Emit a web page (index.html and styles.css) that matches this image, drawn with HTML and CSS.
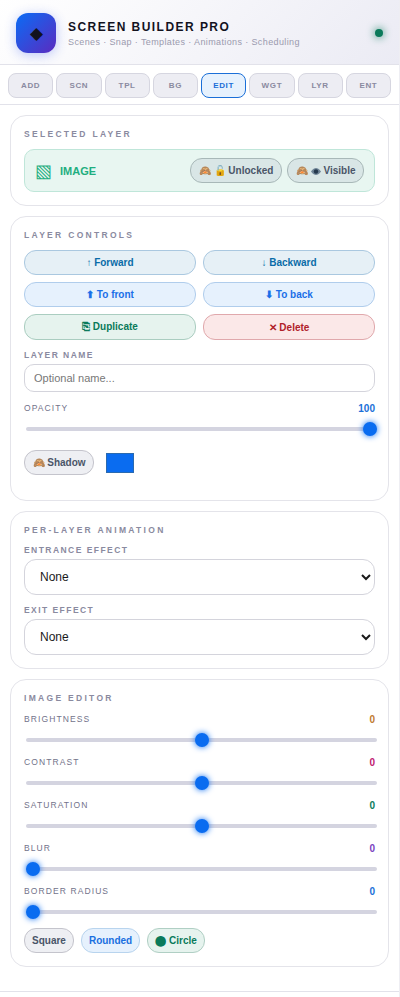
FILE: index.html
```html
<!DOCTYPE html>
<html lang="en">
<head>
<meta charset="utf-8">
<title>Screen Builder Pro</title>
<link rel="stylesheet" href="styles.css">
</head>
<body>
<div class="panel">
  <header class="header">
    <div class="logo">◆</div>
    <div class="brand">
      <div class="title">SCREEN BUILDER PRO</div>
      <div class="subtitle">Scenes · Snap · Templates · Animations · Scheduling</div>
    </div>
    <span class="status"></span>
  </header>
  <nav class="tabs">
    <button class="tab">ADD</button>
    <button class="tab">SCN</button>
    <button class="tab">TPL</button>
    <button class="tab">BG</button>
    <button class="tab active">EDIT</button>
    <button class="tab">WGT</button>
    <button class="tab">LYR</button>
    <button class="tab">ENT</button>
  </nav>
  <main class="content">
    <section class="card">
      <h2 class="card-title">SELECTED LAYER</h2>
      <div class="selected">
        <span class="sel-icon">▧</span>
        <span class="sel-name">IMAGE</span>
        <button class="pill dark push">🙈 🔓 Unlocked</button>
        <button class="pill dark snug">🙈 <svg class="eye" viewBox="0 0 10 7" width="10" height="7" aria-hidden="true"><path class="eye-lid" d="M0 3.5C2 .8 3.5 0 5 0s3 .8 5 3.5C8 6.2 6.500 7 5 7S2 6.200 0 3.500Z"/><circle class="eye-iris" cx="5" cy="3.500" r="2.200"/></svg> Visible</button>
      </div>
    </section>
    <section class="card">
      <h2 class="card-title">LAYER CONTROLS</h2>
      <div class="actions">
        <button class="act teal">↑ Forward</button>
        <button class="act teal">↓ Backward</button>
        <button class="act blue">⬆ To front</button>
        <button class="act blue">⬇ To back</button>
        <button class="act green">⎘ Duplicate</button>
        <button class="act red">✕ Delete</button>
      </div>
      <label class="label field-label name-label">LAYER NAME</label>
      <input class="text-input" type="text" placeholder="Optional name...">
      <div class="row opacity-row"><span class="label">OPACITY</span><span class="val v-blue">100</span></div>
      <input class="range" type="range" min="0" max="100" value="100">
      <div class="shadow-row">
        <button class="pill plain snug">🙈 Shadow</button>
        <span class="swatch"></span>
      </div>
    </section>
    <section class="card">
      <h2 class="card-title">PER-LAYER ANIMATION</h2>
      <label class="label field-label">ENTRANCE EFFECT</label>
      <select class="select"><option>None</option></select>
      <label class="label field-label exit-label">EXIT EFFECT</label>
      <select class="select"><option>None</option></select>
    </section>
    <section class="card">
      <h2 class="card-title">IMAGE EDITOR</h2>
      <div class="row"><span class="label">BRIGHTNESS</span><span class="val v-orange">0</span></div>
      <input class="range" type="range" min="-100" max="100" value="0">
      <div class="row"><span class="label">CONTRAST</span><span class="val v-pink">0</span></div>
      <input class="range" type="range" min="-100" max="100" value="0">
      <div class="row"><span class="label">SATURATION</span><span class="val v-green">0</span></div>
      <input class="range" type="range" min="-100" max="100" value="0">
      <div class="row"><span class="label">BLUR</span><span class="val v-purple">0</span></div>
      <input class="range" type="range" min="0" max="100" value="0">
      <div class="row"><span class="label">BORDER RADIUS</span><span class="val v-blue">0</span></div>
      <input class="range" type="range" min="0" max="100" value="0">
      <div class="shape-row">
        <button class="pill small plain">Square</button>
        <button class="pill small sky">Rounded</button>
        <button class="pill small mint">⬤ Circle</button>
      </div>
    </section>
  </main>
</div>
</body>
</html>
```
FILE: styles.css
```css
* { box-sizing: border-box; }
html, body { margin: 0; height: 100%; }
body { font-family: "Liberation Sans", Arial, sans-serif; background: #fff; color: #1a1a2e; overflow: hidden; }
button, input, select { font-family: inherit; }
.panel { width: 400px; height: 997px; border-right: 1px solid #eeeef3; }
.header { height: 65px; display: flex; align-items: center; gap: 12px; padding: 2px 16px 0; background: linear-gradient(135deg, #ffffff, #ebebf4); border-bottom: 1px solid #e2e2ea; }
.logo { width: 40px; height: 40px; flex: none; border-radius: 12px; display: flex; align-items: center; justify-content: center; font-size: 17px; color: #12121e; background: linear-gradient(135deg, #0a6cf5, #5b2bc0); box-shadow: 0 2px 12px rgba(40, 80, 240, .3); }
.brand { flex: 1; }
.title { font-size: 12px; font-weight: 700; letter-spacing: 1.46px; color: #12121e; line-height: 16px; }
.subtitle { font-size: 9px; letter-spacing: .38px; color: #9a9aae; line-height: 12px; margin-top: 1px; }
.status { width: 8px; height: 8px; border-radius: 50%; background: #0a7a5a; box-shadow: 0 0 8px #0a7a5a; }
.tabs { height: 40px; display: flex; gap: 3px; padding: 8px 8px 6px; background: #fff; border-bottom: 1px solid #e2e2ea; }
.tab { flex: 1 1 0; min-width: 0; padding: 0; height: 25px; font-size: 8px; font-weight: 700; letter-spacing: .64px; color: #8a8aa0; background: #ededf3; border: 1px solid #d6d6e0; border-radius: 8px; }
.tab.active { color: #1a6fd8; background: #e6f1fd; border-color: #1a6fd8; }
.content { padding: 10px 10px 24px; display: flex; flex-direction: column; gap: 10px; border-bottom: 1px solid #e2e2ea; }
.card { background: #fff; border: 1px solid #e4e4ea; border-radius: 16px; padding: 13px; }
.card-title { margin: 0 0 10px; font-size: 8.5px; line-height: 10px; font-weight: 700; letter-spacing: 2.3px; color: #8a8aa0; }
.selected { height: 43px; display: flex; align-items: center; padding: 0 10px; background: #e8f6f1; border: 1px solid #bfe6d9; border-radius: 10px; }
.sel-icon { font-size: 18px; color: #1fae80; margin-right: 8px; line-height: 1; }
.sel-name { font-size: 11px; font-weight: 700; color: #1fae80; }
.push { margin-left: auto; margin-right: 5px; }
.pill { height: 25px; padding: 0 8px; font-size: 10px; font-weight: 700; border-radius: 12px; color: #4a5568; border: 1px solid #c4c4cc; background: #eeeff3; white-space: nowrap; }
.pill.snug { padding: 0 7.5px; }
.pill.small { padding: 0 7px; }
.pill.dark { background: #d9e6e6; border-color: #a8b8b8; }
.pill.sky { color: #1a6fe0; background: #e6f1fd; border-color: #b8d4ee; }
.pill.mint { color: #0a7a5a; background: #e6f3ee; border-color: #b0cfc4; }
.eye { vertical-align: -0.5px; }
.eye-lid { fill: #6f8497; }
.eye-iris { fill: #24384d; }
.actions { display: grid; grid-template-columns: 1fr 1fr; gap: 7px; }
.act { height: 25px; font-size: 10px; font-weight: 700; border-radius: 12px; border: 1px solid; padding: 0; }
.teal { color: #0a6ca8; background: #e6f0f6; border-color: #aac8e0; }
.blue { color: #1a6fe8; background: #e6f1fd; border-color: #b0cdec; }
.green { height: 26px; color: #0a7a5a; background: #e6f3ee; border-color: #aacdc0; }
.red { height: 26px; color: #b0202a; background: #fbe8e8; border-color: #e0a8ac; }
.label { display: block; font-size: 8.5px; line-height: 10px; letter-spacing: 1.1px; color: #72728a; }
.field-label { font-weight: 700; letter-spacing: 1.45px; color: #8a8aa0; }
.name-label { margin-top: 10px; }
.text-input { display: block; width: 100%; height: 28px; margin-top: 4px; padding: 0 9px; font-size: 11px; border: 1px solid #d4d4dc; border-radius: 10px; background: #fff; outline: none; }
.text-input::placeholder { color: #777; }
.row { display: flex; justify-content: space-between; align-items: center; height: 12px; }
.range + .row { margin-top: 8px; }
.opacity-row { margin-top: 10px; }
.val { font-size: 10px; font-weight: 700; }
.v-blue { color: #1a6fd8; }
.v-orange { color: #c07a30; }
.v-pink { color: #c02070; }
.v-green { color: #0a7a5a; }
.v-purple { color: #7a3fc0; }
.range { -webkit-appearance: none; appearance: none; display: block; width: 100%; height: 16px; margin: 7px 0 0 2px; background: transparent; outline: none; }
.range::-webkit-slider-runnable-track { height: 4px; border-radius: 2px; background: #d4d4e0; }
.range::-webkit-slider-thumb { -webkit-appearance: none; width: 14px; height: 14px; margin-top: -5px; border-radius: 50%; background: #0a6cf0; box-shadow: 0 0 6px #0a6cf0; }
.shadow-row { display: flex; align-items: center; gap: 12px; margin-top: 13px; padding-bottom: 12px; }
.swatch { width: 28px; height: 20px; background: #0a6cf0; border: 1px solid #2a6ab0; }
.select { display: block; width: 100%; height: 36px; margin-top: 4px; padding: 0 11px; font-size: 12px; color: #1a1a1a; background: #fff; border: 1px solid #d4d4dc; border-radius: 12px; outline: none; }
.exit-label { margin-top: 10px; }
.shape-row { display: flex; gap: 7px; margin-top: 8px; }
```
